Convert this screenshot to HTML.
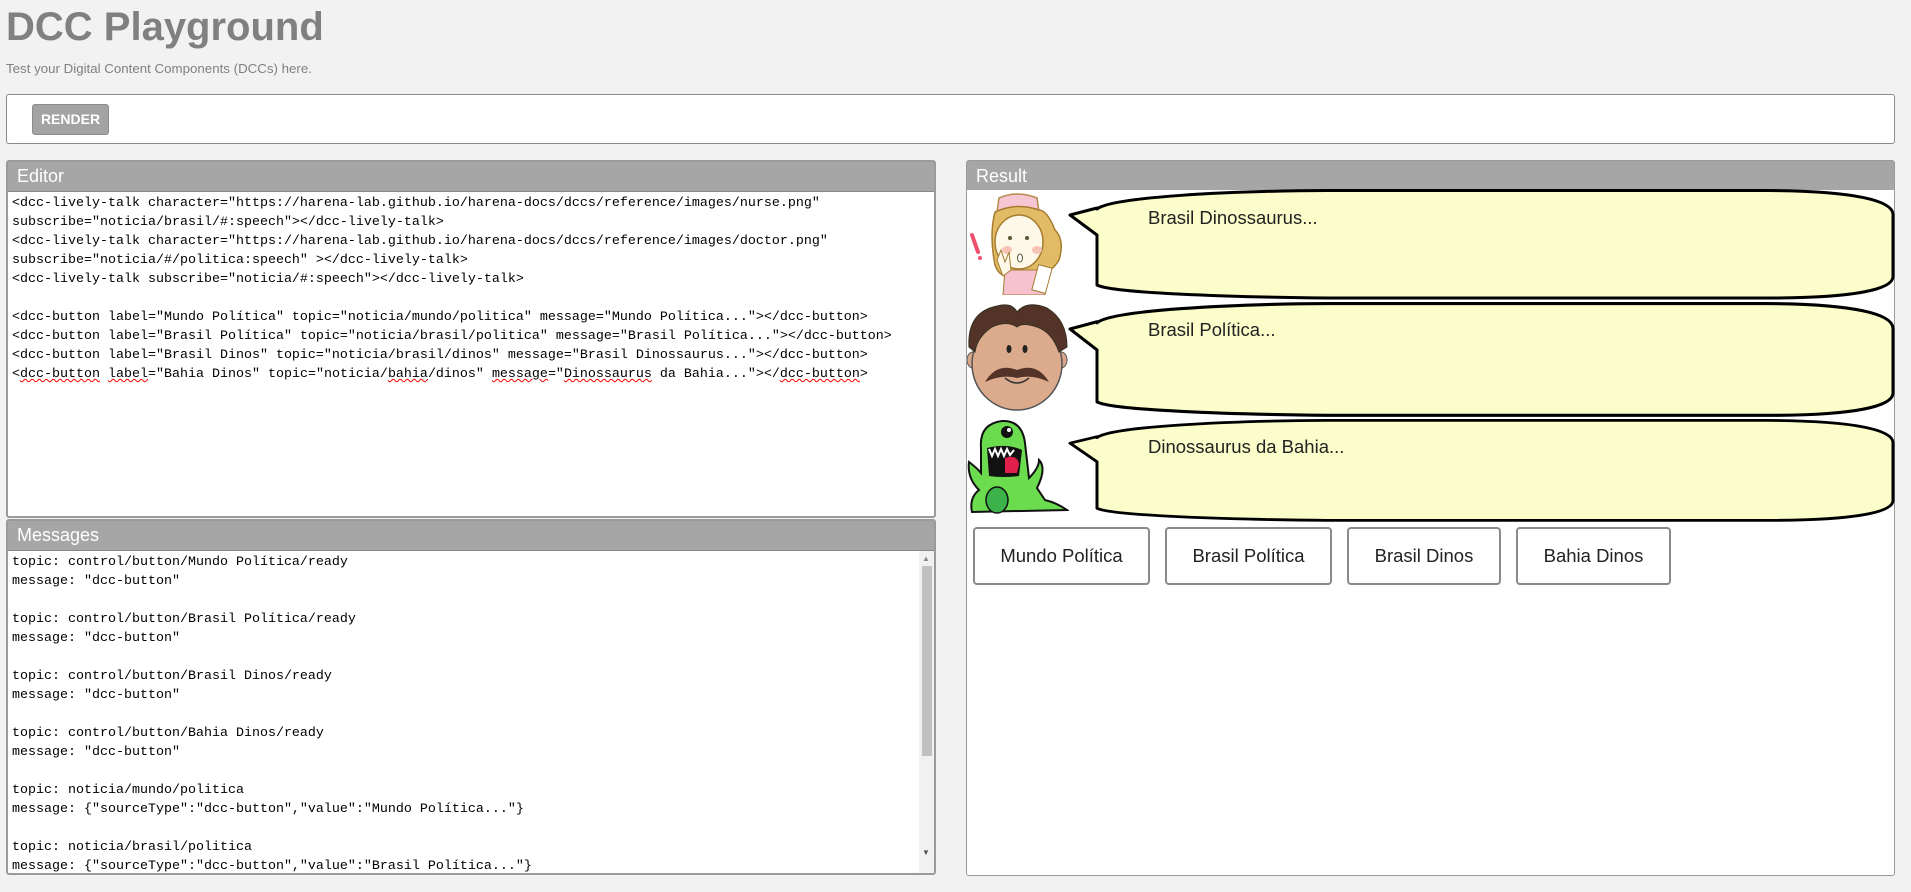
<!DOCTYPE html>
<html><head><meta charset="utf-8">
<style>
*{margin:0;padding:0;box-sizing:border-box}
body{width:1911px;height:892px;background:#f2f2f2;font-family:"Liberation Sans",Arial,sans-serif;position:relative;overflow:hidden}
.abs{position:absolute}
h1{position:absolute;left:6px;top:2px;font-size:40px;font-weight:bold;color:#808080;line-height:50px}
.sub{left:6px;top:61px;font-size:13.3px;color:#808080}
.rbox{left:6px;top:94px;width:1889px;height:50px;background:#fff;border:1px solid #8a8a8a;border-radius:3px}
.rbtn{left:32px;top:104px;width:77px;height:31px;background:#a3a3a3;border:1px solid #8c8c8c;border-radius:3px;color:#fff;font-weight:bold;font-size:14px;text-align:center;line-height:29px}
.panel{background:#fff;border:1px solid #9a9a9a;border-radius:3px}
.hdr{background:#a6a6a6;color:#fff;font-size:18px;line-height:29px;height:29px;padding-left:9px}
.code{font-family:"Liberation Mono","DejaVu Sans Mono",monospace;font-size:13.33px;line-height:19px;color:#000;white-space:pre;padding-left:4px}
.sq{text-decoration:underline wavy red;text-decoration-thickness:1px}
.btn{position:absolute;top:527px;height:58px;background:#fff;border:2px solid #8a8a8a;border-radius:4px;font-size:18.5px;color:#222;text-align:center;line-height:54px}
.btxt{position:absolute;left:1148px;font-size:18.5px;color:#222}
</style></head><body>
<h1>DCC Playground</h1>
<div class="abs sub">Test your Digital Content Components (DCCs) here.</div>
<div class="abs rbox"></div>
<div class="abs rbtn">RENDER</div>

<div class="abs panel" style="left:6px;top:160px;width:930px;height:358px;border:2px solid #9a9a9a">
 <div class="hdr">Editor</div>
 <div class="code" style="border-top:1px solid #888;padding-top:2px">&lt;dcc-lively-talk character="https://harena-lab.github.io/harena-docs/dccs/reference/images/nurse.png"
subscribe="noticia/brasil/#:speech"&gt;&lt;/dcc-lively-talk&gt;
&lt;dcc-lively-talk character="https://harena-lab.github.io/harena-docs/dccs/reference/images/doctor.png"
subscribe="noticia/#/politica:speech" &gt;&lt;/dcc-lively-talk&gt;
&lt;dcc-lively-talk subscribe="noticia/#:speech"&gt;&lt;/dcc-lively-talk&gt;

&lt;dcc-button label="Mundo Política" topic="noticia/mundo/politica" message="Mundo Política..."&gt;&lt;/dcc-button&gt;
&lt;dcc-button label="Brasil Política" topic="noticia/brasil/politica" message="Brasil Política..."&gt;&lt;/dcc-button&gt;
&lt;dcc-button label="Brasil Dinos" topic="noticia/brasil/dinos" message="Brasil Dinossaurus..."&gt;&lt;/dcc-button&gt;
&lt;<span class="sq">dcc-button</span> <span class="sq">label</span>="Bahia Dinos" topic="noticia/<span class="sq">bahia</span>/dinos" <span class="sq">message</span>="<span class="sq">Dinossaurus</span> da Bahia..."&gt;&lt;/<span class="sq">dcc-button</span>&gt;</div>
</div>

<div class="abs panel" style="left:6px;top:519px;width:930px;height:356px;border:2px solid #9a9a9a;overflow:hidden">
 <div class="hdr">Messages</div>
 <div class="code" style="border-top:1px solid #888;padding-top:2px">topic: control/button/Mundo Política/ready
message: "dcc-button"

topic: control/button/Brasil Política/ready
message: "dcc-button"

topic: control/button/Brasil Dinos/ready
message: "dcc-button"

topic: control/button/Bahia Dinos/ready
message: "dcc-button"

topic: noticia/mundo/politica
message: {"sourceType":"dcc-button","value":"Mundo Política..."}

topic: noticia/brasil/politica
message: {"sourceType":"dcc-button","value":"Brasil Política..."}</div>
 <div class="abs" style="left:911px;top:30px;width:15px;height:322px;background:#f1f1f1"></div>
 <div class="abs" style="left:914px;top:45px;width:10px;height:190px;background:#c1c1c1"></div>
 <div class="abs" style="left:914px;top:33px;font-size:8px;color:#888">▲</div>
 <div class="abs" style="left:914px;top:327px;font-size:8px;color:#555">▼</div>
</div>

<div class="abs panel" style="left:966px;top:160px;width:929px;height:716px">
 <div class="hdr" style="line-height:30px">Result</div>
</div>

<svg class="abs" style="left:1067px;top:189px" width="830" height="335" viewBox="0 0 830 335">
 <defs>
  <path id="bub" d="M30,20 C45,8 160,2 260,1.5 L700,1.5 C790,2 825,12 826,25 L826,88 C825,100 790,109 700,109 L260,109 C160,108 45,104 30,96 L30,46 L3,26 L30,19 Z" fill="#fbfdcb" stroke="#000" stroke-width="3" stroke-linejoin="round"/>
 </defs>
 <use href="#bub" transform="translate(0,0)"/>
 <g transform="translate(0,113) scale(1,1.04)"><use href="#bub"/></g>
 <g transform="translate(0,230) scale(1,0.93)"><use href="#bub"/></g>
</svg>
<div class="btxt" style="top:207px">Brasil Dinossaurus...</div>
<div class="btxt" style="top:319px">Brasil Política...</div>
<div class="btxt" style="top:436px">Dinossaurus da Bahia...</div>

<svg class="abs" style="left:967px;top:190px" width="102" height="105" viewBox="0 0 102 105">
 <path d="M32,8 Q50,0 70,8 L72,22 L30,22 Z" fill="#f7c6d4" stroke="#b5894a" stroke-width="1.5"/>
 <path d="M28,22 Q22,45 28,75 Q35,95 60,80 Q80,90 92,70 Q98,50 88,40 Q80,20 72,20 Q50,12 28,22 Z" fill="#e2bb66" stroke="#a57c30" stroke-width="1.5"/>
 <ellipse cx="52" cy="52" rx="24" ry="27" fill="#fdf8e8" stroke="#a57c30" stroke-width="1.5"/>
 <circle cx="43" cy="48" r="2" fill="#553"/><circle cx="60" cy="48" r="2" fill="#553"/>
 <ellipse cx="40" cy="60" rx="5" ry="4" fill="#f6c3b5"/><ellipse cx="70" cy="60" rx="5" ry="4" fill="#f6c3b5"/>
 <ellipse cx="53" cy="68" rx="2.5" ry="4" fill="#fff" stroke="#553"/>
 <path d="M38,80 L75,80 L78,105 L36,105 Z" fill="#f6c2cf" stroke="#a57c30"/>
 <path d="M30,70 L34,60 L38,72 L42,62 L44,80 L36,86 Z" fill="#fdf8e8" stroke="#a57c30"/>
 <rect x="68" y="76" width="14" height="26" fill="#fff" stroke="#a57c30" transform="rotate(15 75 89)"/>
 <path d="M5,45 L11,62" stroke="#f0506e" stroke-width="4" stroke-linecap="round"/><circle cx="13" cy="68" r="2" fill="#f0506e"/>
</svg>
<svg class="abs" style="left:967px;top:302px" width="102" height="110" viewBox="0 0 102 110">
 <ellipse cx="6" cy="58" rx="6" ry="8" fill="#d8a88a" stroke="#555"/>
 <ellipse cx="94" cy="58" rx="6" ry="8" fill="#d8a88a" stroke="#555"/>
 <ellipse cx="50" cy="62" rx="45" ry="46" fill="#dcaa8c" stroke="#555" stroke-width="1.5"/>
 <path d="M2,45 Q0,10 30,4 Q45,0 50,10 Q60,-2 80,6 Q100,18 100,45 L92,50 Q85,30 70,25 Q55,20 50,25 Q40,18 25,25 Q10,35 8,50 Z" fill="#533328" stroke="#332" stroke-width="1"/>
 <ellipse cx="42" cy="47" rx="2.5" ry="4" fill="#222"/><ellipse cx="58" cy="47" rx="2.5" ry="4" fill="#222"/>
 <path d="M18,80 Q30,60 50,68 Q70,60 82,80 Q65,72 50,76 Q35,72 18,80 Z" fill="#533328"/>
 <path d="M38,76 Q50,86 62,76" fill="none" stroke="#333" stroke-width="1.5"/>
</svg>
<svg class="abs" style="left:967px;top:418px" width="102" height="96" viewBox="0 0 102 96">
 <path d="M14,30 Q12,6 35,3 Q55,2 58,25 L62,60 Q72,50 72,42 Q80,50 70,70 L78,82 Q90,85 100,92 L5,94 Q2,80 12,72 Q0,60 2,44 Q10,50 14,55 Z" fill="#6cdc4f" stroke="#111" stroke-width="2"/>
 <circle cx="40" cy="14" r="6" fill="#111"/><circle cx="42" cy="12" r="2" fill="#fff"/>
 <path d="M20,30 Q40,25 55,32 L52,58 Q35,60 22,58 Z" fill="#111"/>
 <path d="M38,40 Q50,36 52,46 L50,55 L38,55 Z" fill="#e0204a"/>
 <path d="M22,31 L25,38 L28,31 L31,38 L34,31 L37,38 L40,31 L43,37 L47,32" fill="none" stroke="#fff" stroke-width="2"/>
 <ellipse cx="30" cy="82" rx="11" ry="13" fill="#3bb24a" stroke="#111" stroke-width="1.5"/>
</svg>

<div class="btn" style="left:973px;width:177px">Mundo Política</div>
<div class="btn" style="left:1165px;width:167px">Brasil Política</div>
<div class="btn" style="left:1347px;width:154px">Brasil Dinos</div>
<div class="btn" style="left:1516px;width:155px">Bahia Dinos</div>
</body></html>
